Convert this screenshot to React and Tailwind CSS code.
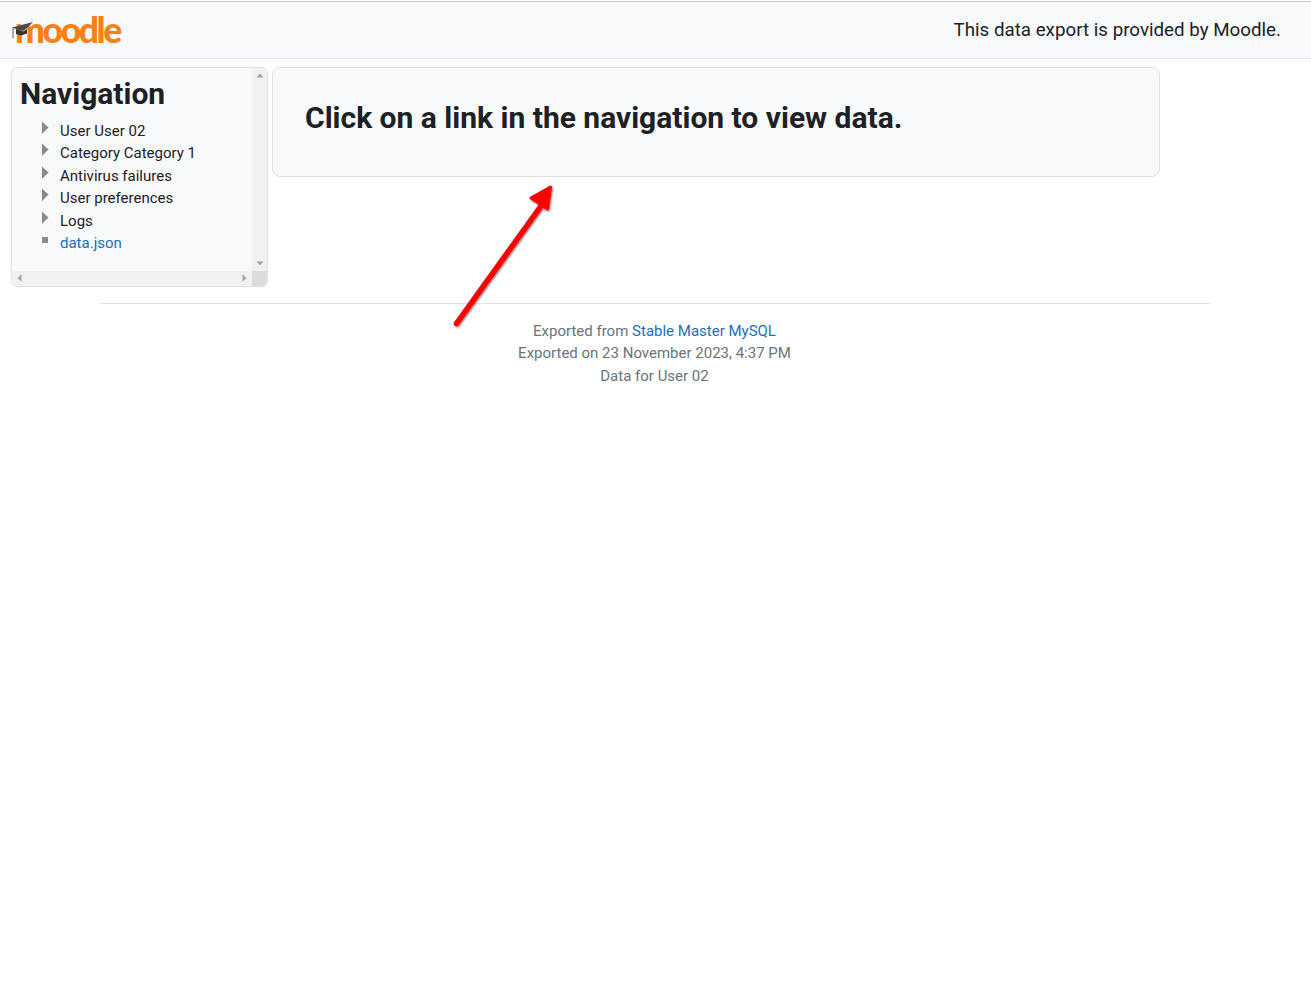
const items = ["User User 02", "Category Category 1", "Antivirus failures", "User preferences", "Logs"];

function Caret() {
  return (
    <svg className="absolute left-[-18px] top-[1px]" width="8" height="14" viewBox="0 0 8 14">
      <path d="M0 0.5L6.5 6.5L0 13Z" fill="#8a8a8a" />
    </svg>
  );
}

function Tri({ d, className }) {
  return (
    <svg className={className} width="8" height="8" viewBox="0 0 8 8">
      <path d={d} fill="#a3a3a3" />
    </svg>
  );
}

export default function App() {
  return (
    <div className="relative min-h-[993px] bg-white font-['Roboto',sans-serif] text-[15px] leading-[22.5px] text-[#1d2125]">
      <header className="mt-px flex h-[58px] items-center justify-between border-y border-t-[#c4c8cc] border-b-[#dee2e6] bg-[#f8f9fa] pl-[12px] pr-[30px]">
        <div className="relative h-[40px] w-[112px]">
          <span className="absolute left-[3px] top-[0px] font-['Lato',sans-serif] text-[35.5px] leading-[40px] font-black tracking-[-2.4px] text-[#f98012]">
            moodle
          </span>
          <svg className="absolute left-0 top-[11px]" width="24" height="20" viewBox="0 0 24 20">
            <path d="M0 6.5L21 1L15 7L11 10L4 8Z" fill="#4a4a4a" />
            <path d="M4 8L11 10.5L15 8V12.5L9 14.5L4 13Z" fill="#333" />
            <path d="M1 7V17" stroke="#555" strokeWidth="1" fill="none" />
          </svg>
        </div>
        <p className="text-[18.75px] leading-[28px]">This data export is provided by Moodle.</p>
      </header>

      <main className="mt-[7.5px] flex items-start gap-[4px] pl-[11px]">
        <aside className="relative h-[220px] w-[257px] overflow-hidden rounded-[6px] border border-[#dee2e6] bg-[#f8f9fa]">
          <div className="pl-[8px] pt-[8px]">
            <h2 className="text-[30px] leading-[36px] font-bold text-[#1d2125]">Navigation</h2>
            <ul className="mt-[8px] pl-[40px]">
              {items.map((t) => (
                <li key={t} className="relative h-[22.5px]">
                  <Caret />
                  {t}
                </li>
              ))}
              <li className="relative h-[22.5px] text-[#1a6fc4]">
                <span className="absolute left-[-18px] top-[5px] h-[6px] w-[6px] bg-[#8a8a8a]" />
                data.json
              </li>
            </ul>
          </div>
          <div className="absolute right-0 top-0 flex h-[203px] w-[15px] flex-col items-center justify-between bg-[#f1f1f1] py-[4px]">
            <Tri d="M4 1.5L7.5 5.5H0.5Z" />
            <Tri d="M0.5 2.5H7.5L4 6.5Z" />
          </div>
          <div className="absolute bottom-0 left-0 flex h-[15px] w-[240px] items-center justify-between bg-[#f1f1f1] px-[4px]">
            <Tri d="M5.5 0.5V7.5L1.5 4Z" />
            <Tri d="M2.5 0.5V7.5L6.5 4Z" />
          </div>
          <div className="absolute bottom-0 right-0 h-[15px] w-[15px] bg-[#dcdcdc]" />
        </aside>

        <section className="h-[110px] w-[888px] rounded-[8px] border border-[#dee2e6] bg-[#f8f9fa] pl-[32px] pt-[32px]">
          <h1 className="text-[30px] leading-[36px] font-bold">Click on a link in the navigation to view data.</h1>
        </section>
      </main>

      <footer className="ml-[100px] mt-[16px] w-[1110px] border-t border-[#dee2e6] pt-[16px] pr-px text-center text-[#6a737b]">
        <div>
          Exported from <a className="text-[#1a6fc4]">Stable Master MySQL</a>
        </div>
        <div>Exported on 23 November 2023, 4:37 PM</div>
        <div>Data for User 02</div>
      </footer>

      <svg className="absolute left-[445px] top-[175px]" width="120" height="160" viewBox="445 175 120 160">
        <defs>
          <filter id="s" x="-30%" y="-30%" width="160%" height="160%">
            <feDropShadow dx="1" dy="1" stdDeviation="1" floodColor="#000" floodOpacity="0.55" />
          </filter>
        </defs>
        <g filter="url(#s)">
          <path d="M456.5 322.5L541 205" stroke="#ff0000" strokeWidth="5.5" strokeLinecap="round" fill="none" />
          <path d="M531 197L550.5 186L547.5 208Z" fill="#ff0000" stroke="#ff0000" strokeWidth="3" strokeLinejoin="round" />
        </g>
      </svg>
    </div>
  );
}
